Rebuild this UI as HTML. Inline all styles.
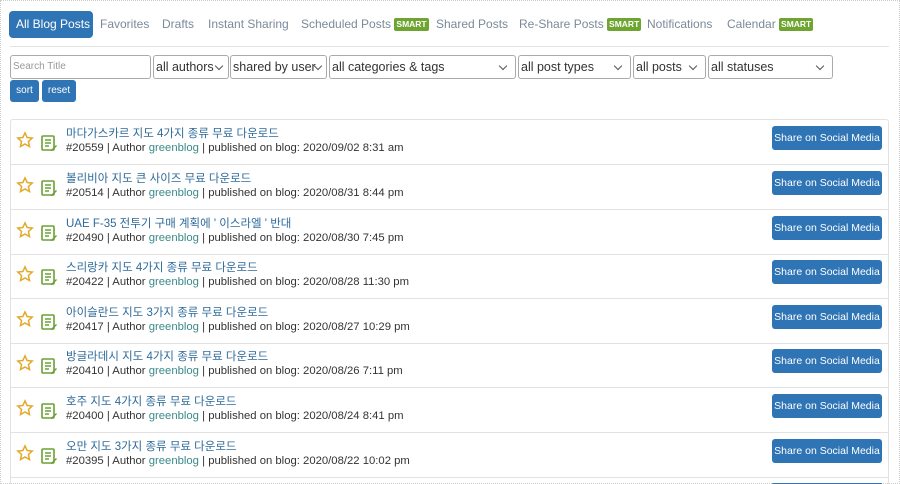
<!DOCTYPE html>
<html><head><meta charset="utf-8"><style>
*{box-sizing:border-box}
html,body{margin:0;width:900px;height:484px;overflow:hidden;background:#fff}
body{font-family:"Liberation Sans","Noto Sans CJK KR",sans-serif}
#w{position:relative;width:900px;height:484px;overflow:hidden}
.frame{position:absolute;left:0;top:0;width:900px;height:484px;border:1px dotted #ccc}
.tab{position:absolute;top:11px;height:27px;line-height:27px;font-size:12px;color:#7a8a99;white-space:nowrap}
.tab.active{background:#2f74b5;color:#fff;border-radius:4px;padding:0 0 0 7px;left:9px;width:84px}
.smart{display:inline-block;background:#6ea531;color:#fff;font-size:8.5px;font-weight:bold;line-height:13px;padding:0 2px;border-radius:2px;vertical-align:1px}
.hr{position:absolute;left:10px;top:46px;width:879px;border-top:1px solid #e4e4e4}
.sel{position:absolute;top:55px;height:24px;border:1px solid #aaa;border-radius:3px;font-size:12.5px;color:#333;line-height:22px;padding-left:2px;background:#fff;white-space:nowrap;overflow:hidden}
.sel .ch{position:absolute;right:5px;top:7px;width:6px;height:6px;border-right:1.3px solid #555;border-bottom:1.3px solid #555;transform:rotate(45deg)}
.btn{position:absolute;top:80px;height:22px;background:#2f74b5;color:#fff;font-size:10px;line-height:22px;text-align:center;border-radius:3px}
.list{position:absolute;left:10px;top:119px;width:879px;height:365px;border:1px solid #e2e2e2;border-bottom:none;border-radius:3px 3px 0 0;overflow:hidden}
.row{position:absolute;left:0;width:877px;height:45px;border-bottom:1px solid #e2e2e2}
.title{position:absolute;left:55px;top:5px;font-size:11.5px;color:#2e6a99}
.meta{position:absolute;left:55px;top:22px;font-size:11.3px;color:#333}
.meta a{color:#3b8a8a}
.share{position:absolute;left:761px;top:6px;width:110px;height:24px;background:#2f74b5;color:#fff;font-size:10.5px;line-height:24px;text-align:center;border-radius:3px}
.star{position:absolute;left:5px;top:11px}
.doc{position:absolute;left:30px;top:15px}
</style></head><body><div id="w">
<div class="frame"></div>
<div class="tab active">All Blog Posts</div>
<div class="tab" style="left:100px">Favorites</div>
<div class="tab" style="left:162px">Drafts</div>
<div class="tab" style="left:208px">Instant Sharing</div>
<div class="tab" style="left:301px">Scheduled Posts <span class="smart">SMART</span></div>
<div class="tab" style="left:436px">Shared Posts</div>
<div class="tab" style="left:519px">Re-Share Posts <span class="smart">SMART</span></div>
<div class="tab" style="left:647px">Notifications</div>
<div class="tab" style="left:727px">Calendar <span class="smart">SMART</span></div>
<div class="hr"></div>
<div class="sel" style="left:10px;width:141px;color:#999;font-size:10px">Search Title</div>
<div class="sel" style="left:153px;width:76px">all authors<span class="ch" style="right:6px"></span></div>
<div class="sel" style="left:230px;width:97px">shared by user<span class="ch"></span></div>
<div class="sel" style="left:329px;width:187px">all categories &amp; tags<span class="ch" style="right:9px"></span></div>
<div class="sel" style="left:518px;width:113px">all post types<span class="ch" style="right:9px"></span></div>
<div class="sel" style="left:633px;width:73px">all posts<span class="ch" style="right:9px"></span></div>
<div class="sel" style="left:708px;width:125px">all statuses<span class="ch" style="right:9px"></span></div>
<div class="btn" style="left:10px;width:29px">sort</div>
<div class="btn" style="left:42px;width:34px">reset</div>
<div class="list">
<div class="row" style="top:0"><svg class="star" width="18" height="18" viewBox="0 0 24 24"><path d="M12 2.5l2.9 6.2 6.7.7-5 4.6 1.4 6.7L12 17.3l-6 3.4 1.4-6.7-5-4.6 6.7-.7z" fill="none" stroke="#e2a92a" stroke-width="2"/></svg><svg class="doc" width="17" height="17" viewBox="0 0 17 17"><rect x="1" y="1" width="12" height="14" rx="1" fill="none" stroke="#6aa035" stroke-width="1.6"/><path d="M4 5h6M4 8h6M4 11h4" stroke="#6aa035" stroke-width="1.4"/><path d="M10 15l5-5 1 1-5 5h-1z" fill="#6aa035"/></svg><div class="title">마다가스카르 지도 4가지 종류 무료 다운로드</div><div class="meta">#20559 | Author <a>greenblog</a> | published on blog: 2020/09/02 8:31 am</div><div class="share">Share on Social Media</div></div>
<div class="row" style="top:45px"><svg class="star" width="18" height="18" viewBox="0 0 24 24"><path d="M12 2.5l2.9 6.2 6.7.7-5 4.6 1.4 6.7L12 17.3l-6 3.4 1.4-6.7-5-4.6 6.7-.7z" fill="none" stroke="#e2a92a" stroke-width="2"/></svg><svg class="doc" width="17" height="17" viewBox="0 0 17 17"><rect x="1" y="1" width="12" height="14" rx="1" fill="none" stroke="#6aa035" stroke-width="1.6"/><path d="M4 5h6M4 8h6M4 11h4" stroke="#6aa035" stroke-width="1.4"/><path d="M10 15l5-5 1 1-5 5h-1z" fill="#6aa035"/></svg><div class="title">볼리비아 지도 큰 사이즈 무료 다운로드</div><div class="meta">#20514 | Author <a>greenblog</a> | published on blog: 2020/08/31 8:44 pm</div><div class="share">Share on Social Media</div></div>
<div class="row" style="top:90px"><svg class="star" width="18" height="18" viewBox="0 0 24 24"><path d="M12 2.5l2.9 6.2 6.7.7-5 4.6 1.4 6.7L12 17.3l-6 3.4 1.4-6.7-5-4.6 6.7-.7z" fill="none" stroke="#e2a92a" stroke-width="2"/></svg><svg class="doc" width="17" height="17" viewBox="0 0 17 17"><rect x="1" y="1" width="12" height="14" rx="1" fill="none" stroke="#6aa035" stroke-width="1.6"/><path d="M4 5h6M4 8h6M4 11h4" stroke="#6aa035" stroke-width="1.4"/><path d="M10 15l5-5 1 1-5 5h-1z" fill="#6aa035"/></svg><div class="title">UAE F-35 전투기 구매 계획에 ' 이스라엘 ' 반대</div><div class="meta">#20490 | Author <a>greenblog</a> | published on blog: 2020/08/30 7:45 pm</div><div class="share">Share on Social Media</div></div>
<div class="row" style="top:134px"><svg class="star" width="18" height="18" viewBox="0 0 24 24"><path d="M12 2.5l2.9 6.2 6.7.7-5 4.6 1.4 6.7L12 17.3l-6 3.4 1.4-6.7-5-4.6 6.7-.7z" fill="none" stroke="#e2a92a" stroke-width="2"/></svg><svg class="doc" width="17" height="17" viewBox="0 0 17 17"><rect x="1" y="1" width="12" height="14" rx="1" fill="none" stroke="#6aa035" stroke-width="1.6"/><path d="M4 5h6M4 8h6M4 11h4" stroke="#6aa035" stroke-width="1.4"/><path d="M10 15l5-5 1 1-5 5h-1z" fill="#6aa035"/></svg><div class="title">스리랑카 지도 4가지 종류 무료 다운로드</div><div class="meta">#20422 | Author <a>greenblog</a> | published on blog: 2020/08/28 11:30 pm</div><div class="share">Share on Social Media</div></div>
<div class="row" style="top:179px"><svg class="star" width="18" height="18" viewBox="0 0 24 24"><path d="M12 2.5l2.9 6.2 6.7.7-5 4.6 1.4 6.7L12 17.3l-6 3.4 1.4-6.7-5-4.6 6.7-.7z" fill="none" stroke="#e2a92a" stroke-width="2"/></svg><svg class="doc" width="17" height="17" viewBox="0 0 17 17"><rect x="1" y="1" width="12" height="14" rx="1" fill="none" stroke="#6aa035" stroke-width="1.6"/><path d="M4 5h6M4 8h6M4 11h4" stroke="#6aa035" stroke-width="1.4"/><path d="M10 15l5-5 1 1-5 5h-1z" fill="#6aa035"/></svg><div class="title">아이슬란드 지도 3가지 종류 무료 다운로드</div><div class="meta">#20417 | Author <a>greenblog</a> | published on blog: 2020/08/27 10:29 pm</div><div class="share">Share on Social Media</div></div>
<div class="row" style="top:223px"><svg class="star" width="18" height="18" viewBox="0 0 24 24"><path d="M12 2.5l2.9 6.2 6.7.7-5 4.6 1.4 6.7L12 17.3l-6 3.4 1.4-6.7-5-4.6 6.7-.7z" fill="none" stroke="#e2a92a" stroke-width="2"/></svg><svg class="doc" width="17" height="17" viewBox="0 0 17 17"><rect x="1" y="1" width="12" height="14" rx="1" fill="none" stroke="#6aa035" stroke-width="1.6"/><path d="M4 5h6M4 8h6M4 11h4" stroke="#6aa035" stroke-width="1.4"/><path d="M10 15l5-5 1 1-5 5h-1z" fill="#6aa035"/></svg><div class="title">방글라데시 지도 4가지 종류 무료 다운로드</div><div class="meta">#20410 | Author <a>greenblog</a> | published on blog: 2020/08/26 7:11 pm</div><div class="share">Share on Social Media</div></div>
<div class="row" style="top:268px"><svg class="star" width="18" height="18" viewBox="0 0 24 24"><path d="M12 2.5l2.9 6.2 6.7.7-5 4.6 1.4 6.7L12 17.3l-6 3.4 1.4-6.7-5-4.6 6.7-.7z" fill="none" stroke="#e2a92a" stroke-width="2"/></svg><svg class="doc" width="17" height="17" viewBox="0 0 17 17"><rect x="1" y="1" width="12" height="14" rx="1" fill="none" stroke="#6aa035" stroke-width="1.6"/><path d="M4 5h6M4 8h6M4 11h4" stroke="#6aa035" stroke-width="1.4"/><path d="M10 15l5-5 1 1-5 5h-1z" fill="#6aa035"/></svg><div class="title">호주 지도 4가지 종류 무료 다운로드</div><div class="meta">#20400 | Author <a>greenblog</a> | published on blog: 2020/08/24 8:41 pm</div><div class="share">Share on Social Media</div></div>
<div class="row" style="top:313px"><svg class="star" width="18" height="18" viewBox="0 0 24 24"><path d="M12 2.5l2.9 6.2 6.7.7-5 4.6 1.4 6.7L12 17.3l-6 3.4 1.4-6.7-5-4.6 6.7-.7z" fill="none" stroke="#e2a92a" stroke-width="2"/></svg><svg class="doc" width="17" height="17" viewBox="0 0 17 17"><rect x="1" y="1" width="12" height="14" rx="1" fill="none" stroke="#6aa035" stroke-width="1.6"/><path d="M4 5h6M4 8h6M4 11h4" stroke="#6aa035" stroke-width="1.4"/><path d="M10 15l5-5 1 1-5 5h-1z" fill="#6aa035"/></svg><div class="title">오만 지도 3가지 종류 무료 다운로드</div><div class="meta">#20395 | Author <a>greenblog</a> | published on blog: 2020/08/22 10:02 pm</div><div class="share">Share on Social Media</div></div>
<div class="row" style="top:357px;height:8px;border-bottom:none"><div class="share" style="height:2px"></div></div>
</div>
</div></body></html>
